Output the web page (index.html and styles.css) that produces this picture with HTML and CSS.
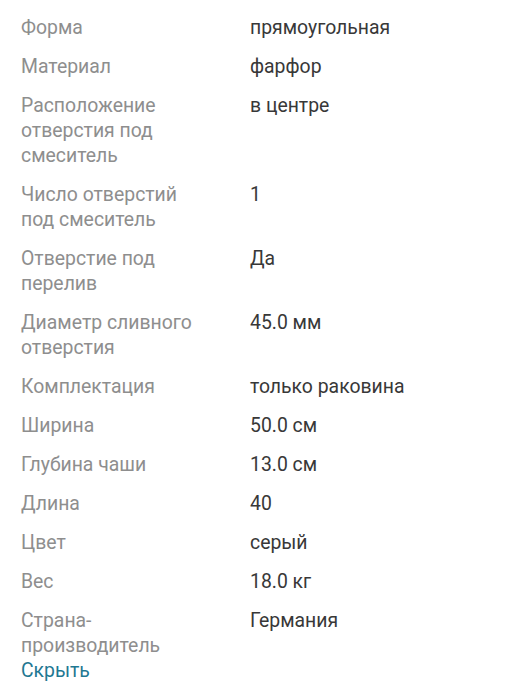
FILE: index.html
```html
<!DOCTYPE html>
<html lang="ru">
<head>
<meta charset="utf-8">
<link rel="stylesheet" href="styles.css">
</head>
<body>
<div class="specs">
  <div class="row"><div class="label">Форма</div><div class="value">прямоугольная</div></div>
  <div class="row"><div class="label">Материал</div><div class="value">фарфор</div></div>
  <div class="row"><div class="label">Расположение отверстия под смеситель</div><div class="value">в центре</div></div>
  <div class="row"><div class="label">Число отверстий под смеситель</div><div class="value">1</div></div>
  <div class="row"><div class="label">Отверстие под перелив</div><div class="value">Да</div></div>
  <div class="row"><div class="label">Диаметр сливного отверстия</div><div class="value">45.0 мм</div></div>
  <div class="row"><div class="label">Комплектация</div><div class="value">только раковина</div></div>
  <div class="row"><div class="label">Ширина</div><div class="value">50.0 см</div></div>
  <div class="row"><div class="label">Глубина чаши</div><div class="value">13.0 см</div></div>
  <div class="row"><div class="label">Длина</div><div class="value">40</div></div>
  <div class="row"><div class="label">Цвет</div><div class="value">серый</div></div>
  <div class="row"><div class="label">Вес</div><div class="value">18.0 кг</div></div>
  <div class="row last"><div class="label">Страна-производитель</div><div class="value">Германия</div></div>
  <a class="toggle" href="#">Скрыть</a>
</div>
</body>
</html>
```
FILE: styles.css
```css
html, body {
  margin: 0;
  padding: 0;
  background: #fff;
}
body {
  font-family: Roboto, "Noto Sans", sans-serif;
  font-size: 19.4px;
  line-height: 25px;
}
.specs {
  padding: 15px 0 0 21px;
  display: flex;
  flex-direction: column;
  gap: 14px;
}
.row {
  display: grid;
  grid-template-columns: 182px 1fr;
  column-gap: 47px;
}
.row.last {
  margin-bottom: -14px;
}
.label {
  color: #8e8e8e;
}
.value {
  color: #383838;
}
.toggle {
  color: #1f7892;
  text-decoration: none;
}
```
